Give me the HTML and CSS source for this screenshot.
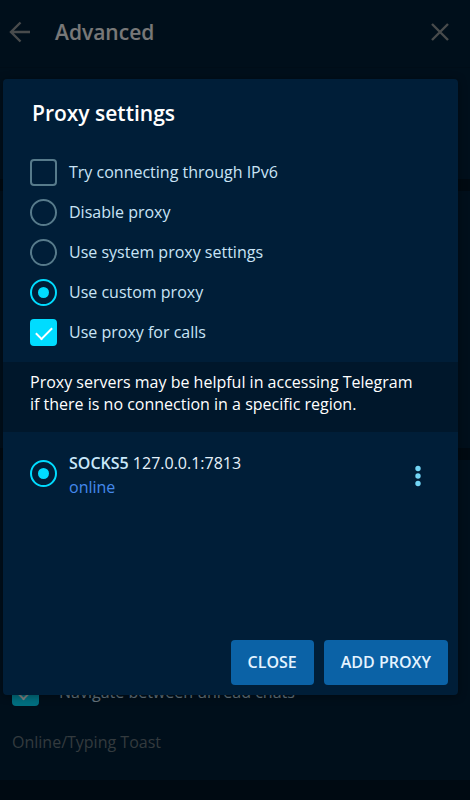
FILE: index.html
```html
<!DOCTYPE html>
<html lang="en">
<head>
<meta charset="utf-8">
<meta name="viewport" content="width=device-width, initial-scale=1">
<title>Proxy settings</title>
<link rel="stylesheet" href="styles.css">
</head>
<body>
<div class="page">
  <header class="topbar">
    <button class="icon-button" type="button" aria-label="Back">
      <svg width="22" height="22" viewBox="0 0 22 22"><path d="M21 11H2.500M11.500 1.500L2 11L11.500 20.500"/></svg>
    </button>
    <h1 class="topbar-title">Advanced</h1>
    <button class="icon-button" type="button" aria-label="Close settings">
      <svg width="22" height="22" viewBox="0 0 22 22"><path d="M3 3L19 19M19 3L3 19"/></svg>
    </button>
  </header>
  <section class="group group-top"></section>
  <section class="group group-middle"></section>
  <section class="group group-last">
    <label class="option"><input class="check" type="checkbox" checked><span>Navigate between unread chats</span></label>
    <p class="setting">Online/Typing Toast</p>
  </section>
</div>

<div class="overlay">
  <div class="dialog" role="dialog" aria-labelledby="dialog-title">
    <h2 class="dialog-title" id="dialog-title">Proxy settings</h2>
    <form class="options">
      <label class="option"><input class="check" type="checkbox"><span>Try connecting through IPv6</span></label>
      <label class="option"><input class="radio" type="radio" name="mode"><span>Disable proxy</span></label>
      <label class="option"><input class="radio" type="radio" name="mode"><span>Use system proxy settings</span></label>
      <label class="option"><input class="radio" type="radio" name="mode" checked><span>Use custom proxy</span></label>
      <label class="option"><input class="check" type="checkbox" checked><span>Use proxy for calls</span></label>
    </form>
    <p class="about">Proxy servers may be helpful in accessing Telegram if there is no connection in a specific region.</p>
    <div class="proxies">
      <div class="proxy">
        <label class="option">
          <input class="radio" type="radio" name="proxy" checked>
          <span class="proxy-text">
            <span class="proxy-name"><b>SOCKS5</b> 127.0.0.1:7813</span>
            <span class="proxy-status">online</span>
          </span>
        </label>
        <button class="menu-button" type="button" aria-label="Proxy menu">
          <svg width="6" height="22" viewBox="0 0 6 22"><circle cx="3" cy="3.500" r="2.700"/><circle cx="3" cy="11" r="2.700"/><circle cx="3" cy="18.500" r="2.700"/></svg>
        </button>
      </div>
    </div>
    <footer class="actions">
      <button class="button" type="button">CLOSE</button>
      <button class="button" type="button">ADD PROXY</button>
    </footer>
  </div>
</div>
</body>
</html>
```
FILE: styles.css
```css
* {
  box-sizing: border-box;
}

body {
  margin: 0;
  position: relative;
  min-height: 100vh;
  background: #001424;
  font: 16px/22px "Open Sans", sans-serif;
}

h1,
h2,
p {
  margin: 0;
}

button {
  border: 0;
  padding: 0;
  background: none;
  font: inherit;
}

.page {
  display: flex;
  flex-direction: column;
  gap: 12px;
  min-height: 100vh;
}

.topbar {
  display: flex;
  align-items: center;
  gap: 24px;
  height: 68px;
  margin-bottom: -12px;
  padding: 0 19px 4px 9px;
  background: #001e36;
  border-bottom: 1px solid #001a30;
}

.topbar-title {
  flex: 1;
  color: #f0f0f0;
  font-size: 21px;
  font-weight: 600;
  line-height: 28px;
}

.icon-button {
  display: flex;
}

.icon-button svg {
  fill: none;
  stroke: #909698;
  stroke-width: 2.4;
}

.group {
  background: #001e36;
}

.group-top {
  height: 111px;
}

.group-middle {
  height: 257px;
}

.group-last {
  display: flex;
  flex-direction: column;
  justify-content: flex-end;
  gap: 25px;
  height: 320px;
  padding: 0 12px 27px;
}

.group-last .option {
  gap: 20px;
}

.setting {
  color: #66747c;
}

.option {
  display: flex;
  align-items: center;
  gap: 12px;
  min-height: 27px;
  color: #c9e4f6;
}

.option > span {
  padding-bottom: 2px;
}

.check,
.radio {
  appearance: none;
  display: grid;
  place-items: center;
  flex: none;
  width: 27px;
  height: 27px;
  margin: 0;
  border: 2px solid #577b8b;
}

.check {
  border-radius: 4px;
}

.check:checked {
  border-color: #00dcff;
  background: #00dcff;
}

.check:checked::before {
  content: "";
  width: 14px;
  height: 7px;
  margin-top: -2px;
  border: solid #fff;
  border-width: 0 0 2px 2px;
  transform: rotate(-45deg);
}

.radio {
  border-radius: 50%;
}

.radio:checked {
  border-color: #00dcff;
}

.radio:checked::before {
  content: "";
  width: 11px;
  height: 11px;
  border-radius: 50%;
  background: #00dcff;
}

.overlay {
  position: absolute;
  inset: 0;
  padding: 79px 12px 0 3px;
  background: rgba(0, 0, 0, 0.5);
}

.dialog {
  overflow: hidden;
  border-radius: 4px;
  background: #001e38;
  box-shadow: 0 1px 8px rgba(0, 0, 0, 0.4);
}

.dialog-title {
  padding: 20px 29px 32px;
  color: #fff;
  font-size: 21px;
  font-weight: 600;
  line-height: 28px;
}

.options {
  display: flex;
  flex-direction: column;
  gap: 13px;
  padding: 0 27px 16px;
}

.about {
  padding: 9px 36px 17px 27px;
  background: #00172b;
  color: #fff;
}

.proxies {
  min-height: 208px;
  padding: 20px 37px 0 27px;
}

.proxy {
  display: flex;
  align-items: center;
  justify-content: space-between;
}

.proxy .option {
  align-items: start;
}

.proxy .radio {
  margin-top: 8px;
}

.proxy-text {
  display: grid;
  gap: 2px;
}

.proxy-name {
  color: #e6f2fb;
}

.proxy-name b {
  color: #c9e8fb;
  font-weight: 600;
}

.proxy-status {
  color: #4489ec;
}

.menu-button {
  display: flex;
}

.menu-button svg {
  fill: #72d5f5;
}

.actions {
  display: flex;
  justify-content: flex-end;
  gap: 10px;
  padding: 0 10px 10px;
}

.button {
  height: 45px;
  padding: 0 17px 2px;
  border-radius: 4px;
  background: #0b62a6;
  color: #e4f3ff;
  font-weight: 600;
}
```
